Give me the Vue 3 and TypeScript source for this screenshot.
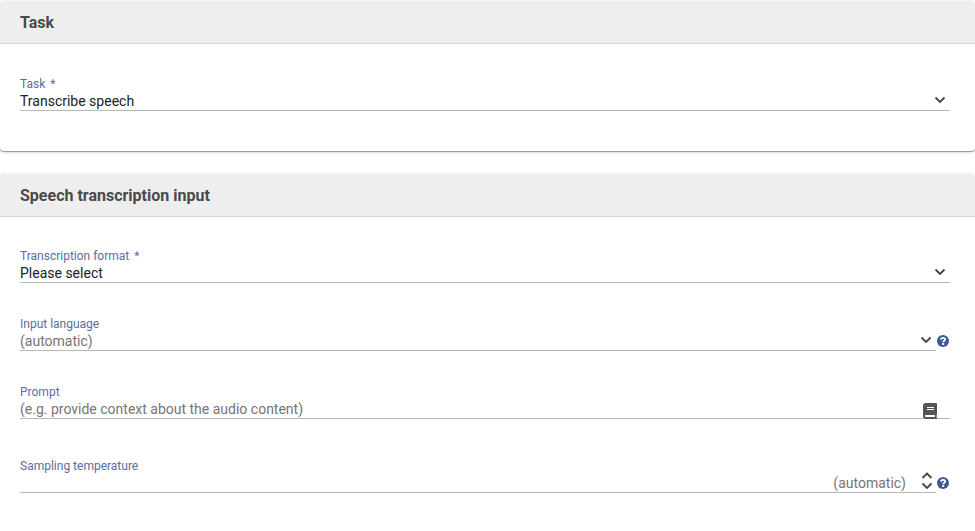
<script setup lang="ts">
import { ref } from 'vue'

const task = ref<string>('transcribe')
const format = ref<string>('')
const language = ref<string>('')
const prompt = ref<string>('')
const temperature = ref<number | null>(null)

function step(delta: number): void {
  const next = Number(temperature.value ?? 0) + delta
  temperature.value = Math.min(1, Math.max(0, Math.round(next * 10) / 10))
}
</script>

<template>
  <main class="page">
    <section class="panel">
      <h2 class="panel-title">Task</h2>
      <div class="panel-body">
        <div class="field">
          <label for="task">Task <span class="required">*</span></label>
          <div class="row">
            <div class="control">
              <select id="task" v-model="task">
                <option value="transcribe">Transcribe speech</option>
              </select>
              <svg class="chevron" viewBox="0 0 12 8" aria-hidden="true"><path d="M1.500 1.500 6 6l4.500-4.500" /></svg>
            </div>
          </div>
        </div>
      </div>
    </section>

    <section class="panel">
      <h2 class="panel-title">Speech transcription input</h2>
      <div class="panel-body stacked">
        <div class="field">
          <label for="format">Transcription format <span class="required">*</span></label>
          <div class="row">
            <div class="control">
              <select id="format" v-model="format">
                <option value="">Please select</option>
              </select>
              <svg class="chevron" viewBox="0 0 12 8" aria-hidden="true"><path d="M1.500 1.500 6 6l4.500-4.500" /></svg>
            </div>
          </div>
        </div>

        <div class="field">
          <label for="language">Input language</label>
          <div class="row">
            <div class="control">
              <select id="language" v-model="language" :class="{ empty: !language }">
                <option value="">(automatic)</option>
              </select>
              <svg class="chevron" viewBox="0 0 12 8" aria-hidden="true"><path d="M1.500 1.500 6 6l4.500-4.500" /></svg>
            </div>
            <button class="help" type="button" aria-label="Help">
              <svg viewBox="0 0 12 12"><circle cx="6" cy="6" r="6" /><path d="M3.900 4.600C4 3.300 4.900 2.900 6 2.900c1.200 0 2.100.6 2.100 1.600C8.100 5.700 6.200 5.600 6.200 7.200" /><rect x="5.200" y="8.100" width="2" height="1.800" rx=".5" /></svg>
            </button>
          </div>
        </div>

        <div class="field">
          <label for="prompt">Prompt</label>
          <div class="row">
            <div class="control">
              <input id="prompt" v-model="prompt" type="text" placeholder="(e.g. provide context about the audio content)" />
              <button class="book" type="button" aria-label="Prompt library">
                <svg viewBox="0 0 14 16"><path class="cover" d="M3 0h10a1 1 0 0 1 1 1v10.500a1 1 0 0 1-.5.900v2a.8.8 0 0 1-.2 1.600H3a3 3 0 0 1-3-3V3a3 3 0 0 1 3-3z" /><path class="detail" d="M4 4h7v1H4zM4 6h7v1H4zM3 12h9v2H3a1 1 0 0 1 0-2z" /></svg>
              </button>
            </div>
          </div>
        </div>

        <div class="field spaced">
          <label for="temperature">Sampling temperature</label>
          <div class="row">
            <div class="control">
              <input id="temperature" v-model="temperature" class="number" type="number" min="0" max="1" step="0.1" placeholder="(automatic)" />
              <div class="spinner">
                <button type="button" aria-label="Increase" @click="step(0.1)">
                  <svg viewBox="0 0 12 8"><path d="M1.500 6 6 1.500 10.500 6" /></svg>
                </button>
                <button type="button" aria-label="Decrease" @click="step(-0.1)">
                  <svg viewBox="0 0 12 8"><path d="M1.500 1.500 6 6l4.500-4.500" /></svg>
                </button>
              </div>
            </div>
            <button class="help" type="button" aria-label="Help">
              <svg viewBox="0 0 12 12"><circle cx="6" cy="6" r="6" /><path d="M3.900 4.600C4 3.300 4.900 2.900 6 2.900c1.200 0 2.100.6 2.100 1.600C8.100 5.700 6.200 5.600 6.200 7.200" /><rect x="5.200" y="8.100" width="2" height="1.800" rx=".5" /></svg>
            </button>
          </div>
        </div>
      </div>
    </section>
  </main>
</template>

<style>
body {
  background: #fff;
  overflow: hidden;
}
</style>

<style scoped>
.page {
  display: flex;
  flex-direction: column;
  gap: 23px;
  padding-top: 1px;
  font-family: Roboto, "Liberation Sans", sans-serif;
  font-size: 14px;
  color: #212121;
}
.panel {
  background: #fff;
  border-radius: 4px;
  box-shadow: 0 1px 4px rgba(0, 0, 0, 0.14), 0 1px 1px rgba(0, 0, 0, 0.38);
}
.panel-title {
  margin: 0;
  padding: 2px 20px 0;
  border-bottom: 1px solid #d5d5d5;
  border-radius: 4px 4px 0 0;
  background: #eee;
  color: #4a4a4a;
  font-size: 16px;
  font-weight: 700;
  line-height: 40px;
}
.panel-body {
  display: flex;
  flex-direction: column;
  gap: 33px;
  padding: 32px 25px 40px 20px;
}
.panel-body.stacked {
  padding-top: 31px;
  padding-bottom: 48px;
}
.field.spaced {
  margin-top: 6px;
}
label {
  display: block;
  color: #5b6e9b;
  font-size: 12px;
  line-height: 16px;
}
.required {
  margin-left: 2px;
}
.row {
  display: flex;
}
.control {
  position: relative;
  display: flex;
  flex: 1;
  min-width: 0;
  border-bottom: 1px solid #b8b8b8;
}
select,
input {
  appearance: none;
  flex: 1;
  min-width: 0;
  height: 18px;
  margin: 0;
  padding: 0;
  border: 0;
  outline: 0;
  border-radius: 0;
  background: transparent;
  color: #212121;
  font: inherit;
  line-height: 18px;
}
select.empty,
input::placeholder {
  color: #757575;
  opacity: 1;
}
input.number {
  appearance: textfield;
  padding-right: 30px;
  text-align: right;
}
input.number::-webkit-inner-spin-button {
  display: none;
}
button {
  display: block;
  margin: 0;
  padding: 0;
  border: 0;
  background: none;
  cursor: pointer;
}
svg {
  display: block;
}
.chevron,
.spinner svg {
  width: 12px;
  height: 8px;
  fill: none;
  stroke: #444;
  stroke-width: 1.8;
}
.chevron {
  position: absolute;
  top: 4px;
  right: 4px;
  pointer-events: none;
}
.spinner {
  position: absolute;
  right: 3px;
  bottom: 2px;
  display: grid;
  gap: 2px;
}
.book {
  position: absolute;
  right: 13px;
  bottom: -1px;
}
.book svg {
  width: 14px;
  height: 16px;
}
.cover {
  fill: #555;
}
.detail {
  fill: #fff;
}
.help {
  flex: none;
  width: 14px;
  height: 16px;
  padding: 3px 1px 1px;
}
.help svg {
  width: 12px;
  height: 12px;
}
.help circle {
  fill: #3b5998;
}
.help path {
  fill: none;
  stroke: #fff;
  stroke-width: 1.8;
}
.help rect {
  fill: #fff;
}
</style>
